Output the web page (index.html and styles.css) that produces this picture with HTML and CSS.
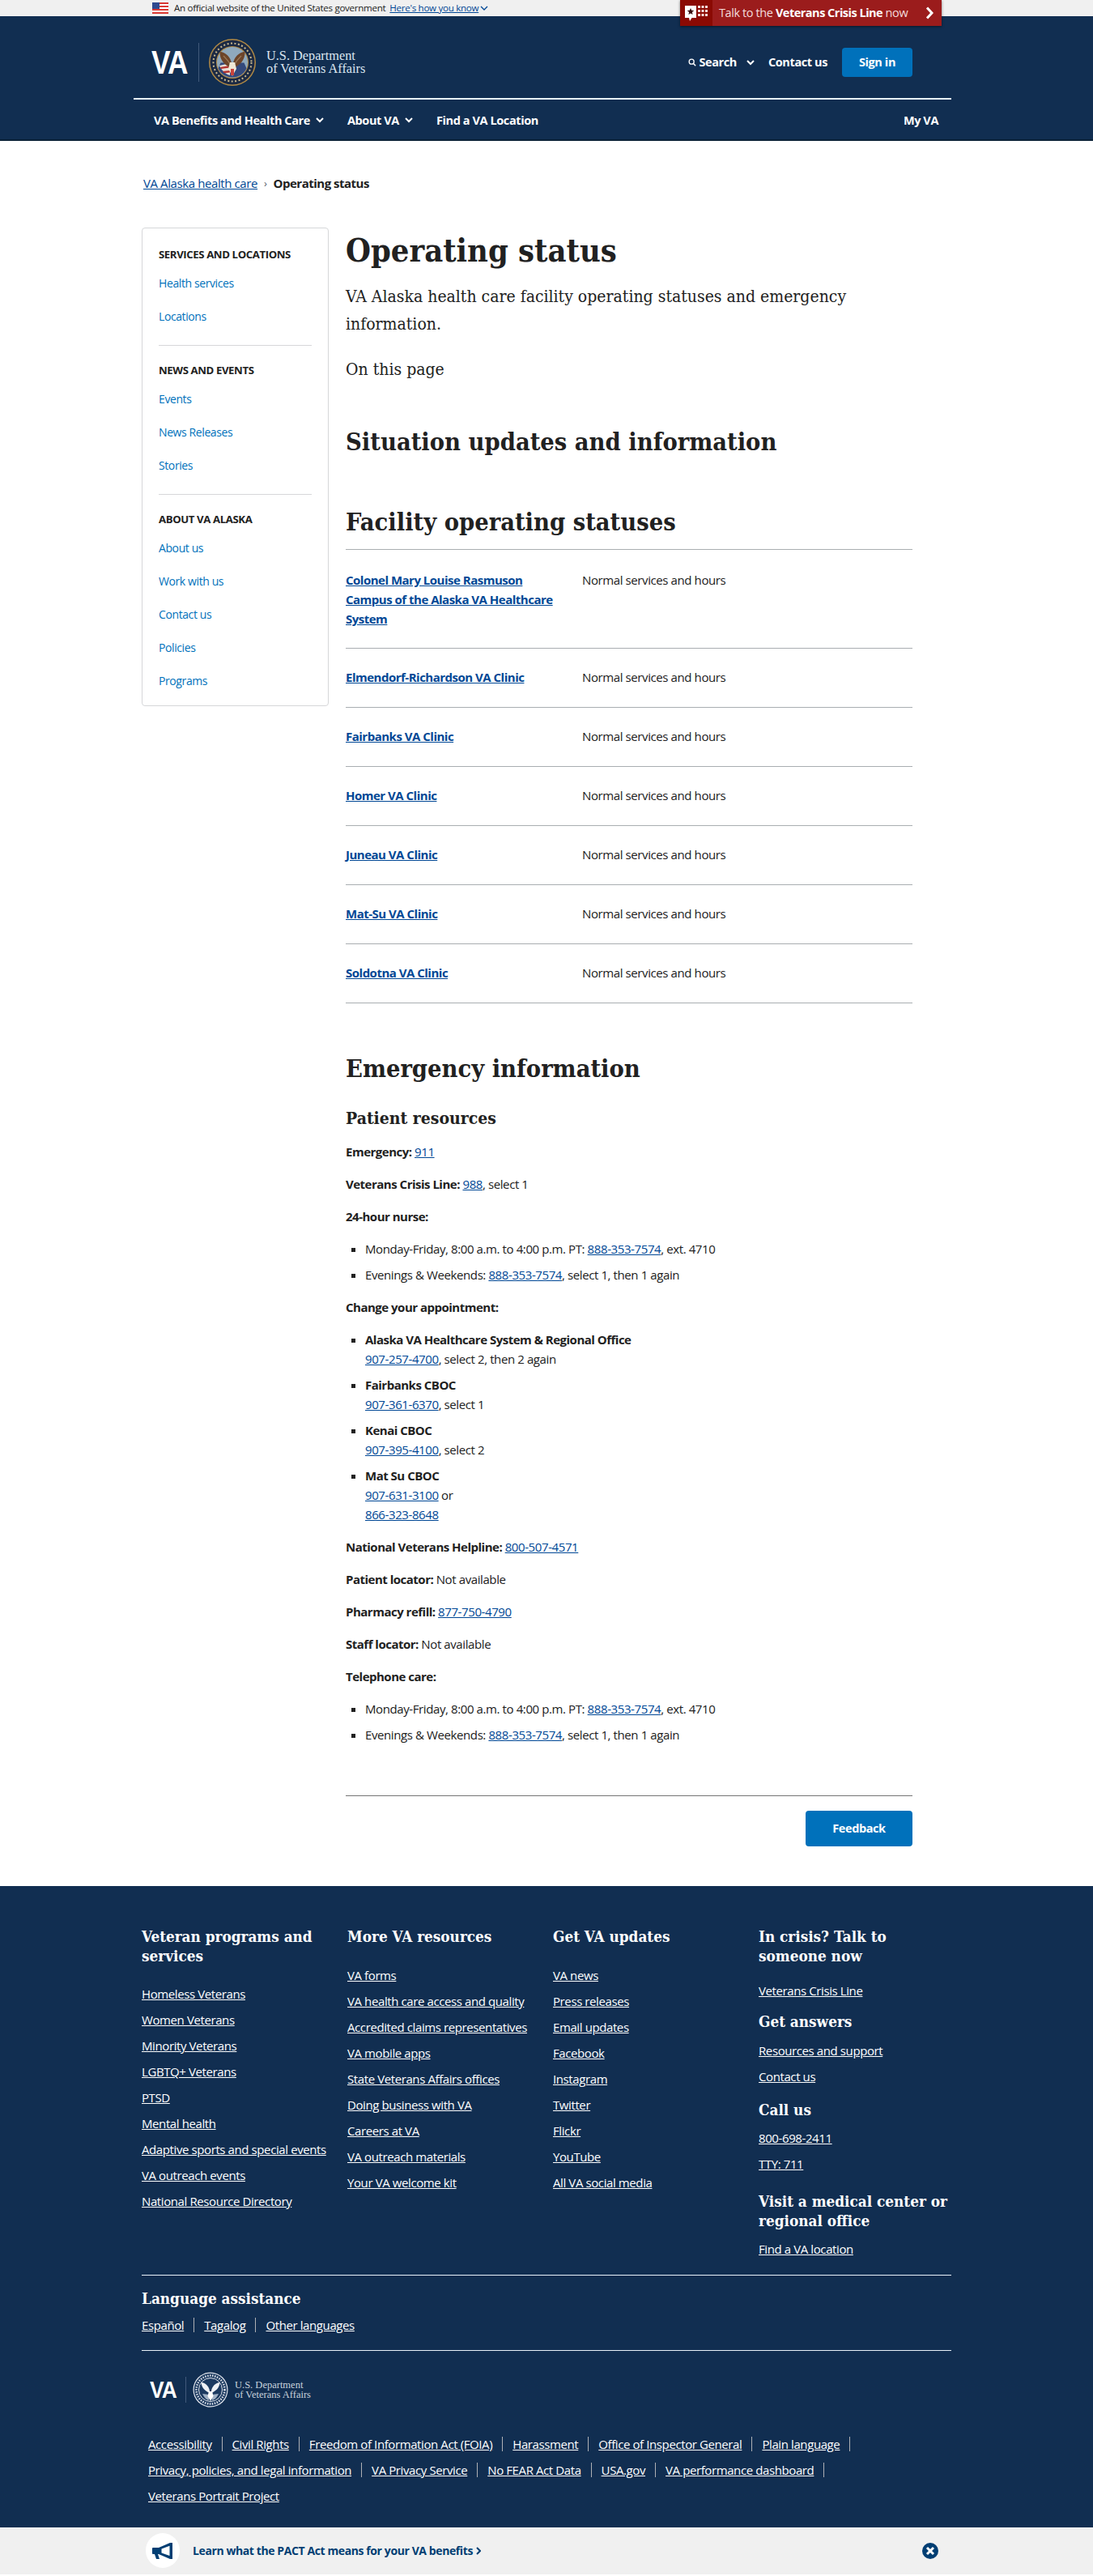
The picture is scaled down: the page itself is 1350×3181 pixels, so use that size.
FILE: index.html
```html
<!DOCTYPE html>
<html lang="en">
<head>
<meta charset="utf-8">
<title>Operating status | VA Alaska health care</title>
<link rel="stylesheet" href="styles.css">
</head>
<body>
<div class="gov-banner">
  <svg class="flag" viewBox="0 0 20 14" width="20" height="14"><rect width="20" height="14" fill="#fff"/><g fill="#d83933"><rect width="20" height="2"/><rect y="4" width="20" height="2"/><rect y="8" width="20" height="2"/><rect y="12" width="20" height="2"/></g><rect width="9" height="8" fill="#2e4a8f"/></svg>
  <span>An official website of the United States government</span>
  <a class="gov-link" href="#">Here's how you know</a>
  <svg class="gov-chev" viewBox="0 0 10 6" width="10" height="6"><path d="M1 1l4 4 4-4" fill="none" stroke="#004795" stroke-width="1.3"/></svg>
</div>

<a class="crisis" href="#">
  <span class="crisis-icon">
    <svg viewBox="0 0 30 24" width="30" height="24"><path d="M1 3h14v15H9.500L7 22l-1-4H1z" fill="#fff"/><path d="M8 6l1.200 2.800 3 .2-2.300 2 .7 3L8 12.400l-2.600 1.600.7-3-2.300-2 3-.2z" fill="#3a1111"/><g fill="#f6dcdc"><rect x="17" y="3" width="3" height="3"/><rect x="21.500" y="3" width="3" height="3"/><rect x="26" y="3" width="3" height="3"/><rect x="17" y="8" width="3" height="3"/><rect x="21.500" y="8" width="3" height="3"/><rect x="26" y="8" width="3" height="3"/><rect x="17" y="13" width="3" height="3"/><rect x="21.500" y="13" width="3" height="3"/><rect x="26" y="13" width="3" height="3"/></g></svg>
  </span>
  <span class="crisis-text">Talk to the <b>Veterans Crisis Line</b> now</span>
  <svg class="crisis-chev" viewBox="0 0 10 16" width="10" height="16"><path d="M2 1.500L8 8l-6 6.500" fill="none" stroke="#fff" stroke-width="3"/></svg>
</a>

<header class="site-header">
  <div class="masthead">
    <div class="logo">
      <span class="logo-va">VA</span>
      <span class="logo-sep"></span>
      <svg class="seal" viewBox="0 0 58 58" width="58" height="58">
        <circle cx="29" cy="29" r="29" fill="#b18a45"/>
        <circle cx="29" cy="29" r="27.500" fill="#1c2a44"/>
        <circle cx="29" cy="29" r="23.500" fill="none" stroke="#c9b98f" stroke-width="2" stroke-dasharray="2 2.500"/>
        <circle cx="29" cy="29" r="20" fill="#b18a45"/>
        <circle cx="29" cy="29" r="19" fill="#8fa9bd"/>
        <path d="M29 47.500c-8 0-14-4-17.500-11l3-7h29l3 7c-3.500 7-9.500 11-17.500 11z" fill="#33497c"/>
        <path d="M13 33l13-3v15c-6-2-10-6-13-12z" fill="#e9dcd2"/>
        <path d="M14 35l12-2v2.500l-11 1.500zM17 40l9-1v2.500l-7 .7z" fill="#b3302e"/>
        <path d="M28 36C20 33 13 26 13.500 16c7 0 14 7 14.500 15zM30 36c8-3 15-10 14.500-20-7 0-14 7-14.500 15z" fill="#6d452a"/>
        <path d="M18 21c3 3 6 6 8 10M40 21c-3 3-6 6-8 10" stroke="#9a7a58" stroke-width="1.200" fill="none"/>
        <path d="M26 29h6l2 8-5 9-5-9z" fill="#efe8d6"/>
        <path d="M27 37h4v8h-4z" fill="#c9443c"/>
      </svg>
      <span class="logo-text">U.S. Department<br>of Veterans Affairs</span>
    </div>
    <div class="utility">
      <svg class="search-icon" viewBox="0 0 12 12" width="10" height="10"><circle cx="5" cy="5" r="3.600" fill="none" stroke="#fff" stroke-width="1.600"/><path d="M7.500 7.500l3.500 3.500" stroke="#fff" stroke-width="1.800"/></svg>
      <span class="util-item util-search">Search</span>
      <svg class="chev chev-search" viewBox="0 0 10 7" width="10" height="7"><path d="M1 1l4 4 4-4" fill="none" stroke="#fff" stroke-width="2"/></svg>
      <a class="util-item util-contact" href="#">Contact us</a>
      <a class="signin" href="#">Sign in</a>
    </div>
  </div>
  <nav class="main-nav">
    <a class="nav-item" href="#">VA Benefits and Health Care<svg class="chev" viewBox="0 0 10 7" width="10" height="7"><path d="M1 1l4 4 4-4" fill="none" stroke="#fff" stroke-width="2"/></svg></a>
    <a class="nav-item" href="#">About VA<svg class="chev" viewBox="0 0 10 7" width="10" height="7"><path d="M1 1l4 4 4-4" fill="none" stroke="#fff" stroke-width="2"/></svg></a>
    <a class="nav-item" href="#">Find a VA Location</a>
    <a class="nav-item nav-right" href="#">My VA</a>
  </nav>
</header>

<div class="breadcrumb">
  <a href="#">VA Alaska health care</a>
  <span class="crumb-sep">›</span>
  <b>Operating status</b>
</div>

<div class="page">
  <aside class="sidenav">
    <h4>Services and locations</h4>
    <a href="#">Health services</a>
    <a href="#">Locations</a>
    <hr>
    <h4>News and events</h4>
    <a href="#">Events</a>
    <a href="#">News Releases</a>
    <a href="#">Stories</a>
    <hr>
    <h4>About VA Alaska</h4>
    <a href="#">About us</a>
    <a href="#">Work with us</a>
    <a href="#">Contact us</a>
    <a href="#">Policies</a>
    <a href="#">Programs</a>
  </aside>

  <main class="content">
    <h1>Operating status</h1>
    <p class="lead">VA Alaska health care facility operating statuses and emergency information.</p>
    <p class="lead on-page">On this page</p>
    <h2 class="h-situation">Situation updates and information</h2>
    <h2 class="h-facility">Facility operating statuses</h2>

    <div class="status-table">
      <div class="status-row"><a href="#">Colonel Mary Louise Rasmuson Campus of the Alaska VA Healthcare System</a><span>Normal services and hours</span></div>
      <div class="status-row"><a href="#">Elmendorf-Richardson VA Clinic</a><span>Normal services and hours</span></div>
      <div class="status-row"><a href="#">Fairbanks VA Clinic</a><span>Normal services and hours</span></div>
      <div class="status-row"><a href="#">Homer VA Clinic</a><span>Normal services and hours</span></div>
      <div class="status-row"><a href="#">Juneau VA Clinic</a><span>Normal services and hours</span></div>
      <div class="status-row"><a href="#">Mat-Su VA Clinic</a><span>Normal services and hours</span></div>
      <div class="status-row"><a href="#">Soldotna VA Clinic</a><span>Normal services and hours</span></div>
    </div>

    <h2 class="h-emergency">Emergency information</h2>
    <h3>Patient resources</h3>
    <div class="resources">
      <p><b>Emergency:</b> <a href="#">911</a></p>
      <p><b>Veterans Crisis Line:</b> <a href="#">988</a>, select 1</p>
      <p><b>24-hour nurse:</b></p>
      <ul>
        <li>Monday-Friday, 8:00 a.m. to 4:00 p.m. PT: <a href="#">888-353-7574</a>, ext. 4710</li>
        <li>Evenings &amp; Weekends: <a href="#">888-353-7574</a>, select 1, then 1 again</li>
      </ul>
      <p><b>Change your appointment:</b></p>
      <ul>
        <li><b>Alaska VA Healthcare System &amp; Regional Office</b><br><a href="#">907-257-4700</a>, select 2, then 2 again</li>
        <li><b>Fairbanks CBOC</b><br><a href="#">907-361-6370</a>, select 1</li>
        <li><b>Kenai CBOC</b><br><a href="#">907-395-4100</a>, select 2</li>
        <li><b>Mat Su CBOC</b><br><a href="#">907-631-3100</a> or<br><a href="#">866-323-8648</a></li>
      </ul>
      <p><b>National Veterans Helpline:</b> <a href="#">800-507-4571</a></p>
      <p><b>Patient locator:</b> Not available</p>
      <p><b>Pharmacy refill:</b> <a href="#">877-750-4790</a></p>
      <p><b>Staff locator:</b> Not available</p>
      <p><b>Telephone care:</b></p>
      <ul>
        <li>Monday-Friday, 8:00 a.m. to 4:00 p.m. PT: <a href="#">888-353-7574</a>, ext. 4710</li>
        <li>Evenings &amp; Weekends: <a href="#">888-353-7574</a>, select 1, then 1 again</li>
      </ul>
    </div>

    <div class="feedback-bar"><a class="feedback" href="#">Feedback</a></div>
  </main>
</div>

<footer class="site-footer">
  <div class="footer-cols">
    <div class="fcol">
      <h5>Veteran programs and services</h5>
      <a href="#">Homeless Veterans</a>
      <a href="#">Women Veterans</a>
      <a href="#">Minority Veterans</a>
      <a href="#">LGBTQ+ Veterans</a>
      <a href="#">PTSD</a>
      <a href="#">Mental health</a>
      <a href="#">Adaptive sports and special events</a>
      <a href="#">VA outreach events</a>
      <a href="#">National Resource Directory</a>
    </div>
    <div class="fcol">
      <h5>More VA resources</h5>
      <a href="#">VA forms</a>
      <a href="#">VA health care access and quality</a>
      <a href="#">Accredited claims representatives</a>
      <a href="#">VA mobile apps</a>
      <a href="#">State Veterans Affairs offices</a>
      <a href="#">Doing business with VA</a>
      <a href="#">Careers at VA</a>
      <a href="#">VA outreach materials</a>
      <a href="#">Your VA welcome kit</a>
    </div>
    <div class="fcol">
      <h5>Get VA updates</h5>
      <a href="#">VA news</a>
      <a href="#">Press releases</a>
      <a href="#">Email updates</a>
      <a href="#">Facebook</a>
      <a href="#">Instagram</a>
      <a href="#">Twitter</a>
      <a href="#">Flickr</a>
      <a href="#">YouTube</a>
      <a href="#">All VA social media</a>
    </div>
    <div class="fcol fcol-help">
      <h5>In crisis? Talk to someone now</h5>
      <a class="help-first" href="#">Veterans Crisis Line</a>
      <h5 class="help-answers">Get answers</h5>
      <a href="#">Resources and support</a>
      <a href="#">Contact us</a>
      <h5 class="help-call">Call us</h5>
      <a href="#">800-698-2411</a>
      <a href="#">TTY: 711</a>
      <h5 class="help-visit">Visit a medical center or regional office</h5>
      <a href="#">Find a VA location</a>
    </div>
  </div>

  <div class="language">
    <h5>Language assistance</h5>
    <div class="inline-links">
      <a href="#">Español</a><i></i><a href="#">Tagalog</a><i></i><a href="#">Other languages</a>
    </div>
  </div>

  <div class="footer-logo">
    <span class="flogo-va">VA</span>
    <span class="flogo-sep"></span>
    <svg viewBox="0 0 44 44" width="44" height="44">
      <circle cx="22" cy="22" r="21.500" fill="#dfe3ea"/>
      <circle cx="22" cy="22" r="20.300" fill="#1c3a60"/>
      <circle cx="22" cy="22" r="17.500" fill="none" stroke="#dfe3ea" stroke-width="2.500" stroke-dasharray="1.500 1.500"/>
      <circle cx="22" cy="22" r="14.500" fill="none" stroke="#dfe3ea" stroke-width="1"/>
      <path d="M21 26C16 24 11 20 10.500 13c5 0 10 5 10.500 11zM23 26c5-2 10-6 10.500-13-5 0-10 5-10.500 11z" fill="#eef1f5"/>
      <path d="M12 27l8 1v7c-4-1-6-4-8-8zM32 27l-8 1v7c4-1 6-4 8-8z" fill="#9fb0c4"/>
      <path d="M20 24h4l1.500 6-3.500 6-3.500-6z" fill="#fff"/>
    </svg>
    <span class="flogo-text">U.S. Department<br>of Veterans Affairs</span>
  </div>

  <div class="legal">
    <div class="inline-links">
      <a href="#">Accessibility</a><i></i><a href="#">Civil Rights</a><i></i><a href="#">Freedom of Information Act (FOIA)</a><i></i><a href="#">Harassment</a><i></i><a href="#">Office of Inspector General</a><i></i><a href="#">Plain language</a><i></i>
    </div>
    <div class="inline-links">
      <a href="#">Privacy, policies, and legal information</a><i></i><a href="#">VA Privacy Service</a><i></i><a href="#">No FEAR Act Data</a><i></i><a href="#">USA.gov</a><i></i><a href="#">VA performance dashboard</a><i></i>
    </div>
    <div class="inline-links">
      <a href="#">Veterans Portrait Project</a>
    </div>
  </div>
</footer>

<div class="promo">
  <span class="promo-icon">
    <svg viewBox="0 0 26 20" width="26" height="20"><path d="M1 6h7v8H1a1 1 0 0 1-1-1V7a1 1 0 0 1 1-1z" fill="#003e73"/><path fill-rule="evenodd" d="M8 6l14-6h3v20h-3L8 14zM11.500 7.500v5l10 3.500V3.800z" fill="#003e73"/><path d="M3 14h4l2 6H5z" fill="#003e73"/></svg>
  </span>
  <a class="promo-link" href="#">Learn what the PACT Act means for your VA benefits</a>
  <svg class="promo-chev" viewBox="0 0 6 10" width="6" height="10"><path d="M1 1l4 4-4 4" fill="none" stroke="#003e73" stroke-width="2"/></svg>
  <svg class="promo-close" viewBox="0 0 20 20" width="20" height="20"><circle cx="10" cy="10" r="10" fill="#003e73"/><path d="M6 6l8 8M14 6l-8 8" stroke="#fff" stroke-width="3"/></svg>
</div>
</body>
</html>
```
FILE: styles.css
```css
* { box-sizing: border-box; }
html, body { margin: 0; padding: 0; }
body {
  position: relative;
  font-family: "Open Sans", Lato, "Liberation Sans", sans-serif;
  font-stretch: 90%;
  font-size: 15px;
  letter-spacing: -.4px;
  line-height: 24px;
  color: #212121;
  background: #fff;
}
a { color: #004795; }
b { letter-spacing: -.5px; }
h1, h2, h3, h5 {
  margin: 0;
  font-family: "DejaVu Serif Condensed", "DejaVu Serif", serif;
  font-weight: 700;
  font-stretch: normal;
  letter-spacing: 0;
  color: #212121;
}

/* Gov banner */
.gov-banner {
  height: 20px;
  padding-left: 188px;
  display: flex;
  align-items: center;
  background: #f0f0f0;
  font-size: 11.600px;
  letter-spacing: -.3px;
  line-height: 20px;
}
.flag { margin-right: 7px; flex: none; }
.gov-link { margin-left: 5px; }
.gov-chev { margin-left: 2px; }

/* Crisis button */
.crisis {
  position: absolute;
  top: 0;
  left: 840px;
  width: 323px;
  height: 32px;
  display: flex;
  align-items: center;
  background: #9b1c1c;
  box-shadow: 0 1px 3px rgba(0, 0, 0, .5);
  color: #f3dcdc;
  text-decoration: none;
  font-size: 14.500px;
  z-index: 2;
}
.crisis-icon {
  width: 40px;
  height: 32px;
  display: flex;
  align-items: center;
  justify-content: center;
  background: #8b0a03;
}
.crisis-text { margin-left: 8px; white-space: nowrap; }
.crisis-text b { color: #fff; }
.crisis-chev { margin-left: auto; margin-right: 10px; }

/* Header */
.site-header {
  height: 154px;
  background: #112e51;
  border-bottom: 2px solid #0b2238;
  color: #fff;
}
.masthead {
  height: 103px;
  margin: 0 175px 0 165px;
  padding: 0 48px 0 22px;
  display: flex;
  align-items: center;
  justify-content: space-between;
  border-bottom: 2px solid #e8f1f8;
}
.logo { display: flex; align-items: center; margin-top: 13px; height: 60px; }
.logo-va {
  width: 46px;
  font-family: "Liberation Sans", sans-serif;
  font-stretch: normal;
  font-weight: 700;
  font-size: 41px;
  line-height: 48px;
  letter-spacing: -1px;
  color: #fff;
  transform: scaleX(.86);
  transform-origin: left center;
}
.logo-sep { width: 1px; height: 48px; margin: 0 12px; background: #41597a; }
.seal { flex: none; }
.logo-text {
  margin-left: 13px;
  font-family: "Liberation Serif", serif;
  font-stretch: normal;
  font-size: 16.300px;
  letter-spacing: 0;
  line-height: 16px;
  color: #dbe5ef;
  white-space: nowrap;
}
.utility { display: flex; align-items: center; margin-top: 13px; }
.search-icon { margin-right: 3px; }
.util-item { color: #fff; font-weight: 700; font-size: 14.500px; text-decoration: none; }
.chev-search { margin: 0 17px 0 12px; }
.signin {
  width: 87px;
  height: 36px;
  margin-left: 18px;
  display: flex;
  align-items: center;
  justify-content: center;
  background: #0071bb;
  border-radius: 4px;
  color: #fff;
  font-weight: 700;
  font-size: 14.500px;
  text-decoration: none;
}
.main-nav {
  height: 49px;
  margin: 0 175px 0 165px;
  padding: 2px 16px 0 25px;
  display: flex;
  align-items: center;
  gap: 29px;
}
.nav-item {
  color: #fff;
  font-weight: 700;
  font-size: 14.500px;
  text-decoration: none;
  display: flex;
  align-items: center;
  white-space: nowrap;
}
.nav-item .chev { margin-left: 7px; }
.nav-right { margin-left: auto; }

/* Breadcrumb */
.breadcrumb {
  height: 24px;
  margin: 40px 0 0 177px;
  display: flex;
  align-items: center;
  gap: 8px;
  font-size: 15px;
}
.crumb-sep { color: #5b616b; font-size: 13px; }

/* Page layout */
.page {
  margin: 43px 223px 0 175px;
  display: flex;
  align-items: flex-start;
  gap: 21px;
}
.sidenav {
  flex: none;
  width: 231px;
  height: 591px;
  padding: 20px 20px 0;
  display: flex;
  flex-direction: column;
  background: #fff;
  border: 1px solid #d6d7d9;
  border-radius: 4px;
  font-size: 14px;
}
.sidenav h4 {
  margin: 0 0 12px;
  font-size: 13.200px;
  line-height: 24px;
  font-weight: 700;
  text-transform: uppercase;
  color: #212121;
}
.sidenav a {
  height: 41px;
  flex: none;
  line-height: 24px;
  color: #0071bb;
  text-decoration: none;
}
.sidenav hr {
  width: 100%;
  margin: 6px 0 18px;
  border: 0;
  border-top: 1px solid #d6d7d9;
}

/* Main */
.content { flex: 1; min-width: 0; padding-top: 4px; }
h1 { font-size: 39.500px; line-height: 48px; }
.lead {
  margin: 16px 0 0;
  font-family: "DejaVu Serif Condensed", "DejaVu Serif", serif;
  font-stretch: normal;
  font-size: 21px;
  letter-spacing: 0;
  line-height: 34px;
}
.on-page { margin-top: 22px; }
h2 { font-size: 30.500px; line-height: 40px; }
.h-situation { margin-top: 52px; }
.h-facility { margin-top: 59px; }
.h-emergency { margin-top: 60px; }
.status-table { margin-top: 14px; border-bottom: 1px solid #a9aeb1; }
.status-row {
  min-height: 73px;
  padding: 23px 0 24px;
  display: grid;
  grid-template-columns: 262px 1fr;
  column-gap: 30px;
  border-top: 1px solid #a9aeb1;
}
.status-row:first-child { padding-top: 25px; }
.status-row a { font-weight: 700; letter-spacing: -.5px; }
h3 { margin-top: 28px; font-size: 21px; line-height: 28px; }
.resources p { margin: 16px 0 0; }
.resources p:first-child { margin-top: 15px; }
.resources ul { margin: 16px 0 0; padding: 0 0 0 24px; list-style: square; }
.resources li + li { margin-top: 8px; }
.feedback-bar {
  margin-top: 63px;
  padding-top: 18px;
  display: flex;
  justify-content: flex-end;
  border-top: 1px solid #757575;
}
.feedback {
  width: 132px;
  height: 44px;
  display: flex;
  align-items: center;
  justify-content: center;
  background: #0071bb;
  border-radius: 4px;
  color: #fff;
  font-weight: 700;
  font-size: 14.500px;
  text-decoration: none;
}

/* Footer */
.site-footer {
  margin-top: 49px;
  padding: 51px 175px 27px;
  background: #112e51;
  color: #fff;
}
.site-footer a { color: #fff; }
.site-footer h5 { color: #fff; font-size: 18.800px; line-height: 23.500px; }
.footer-cols {
  display: grid;
  grid-template-columns: 254px 254px 254px 238px;
  padding-bottom: 20px;
  border-bottom: 1px solid #e8f1f8;
}
.fcol { display: flex; flex-direction: column; align-items: flex-start; }
.fcol a { display: block; white-space: nowrap; }
.fcol h5 { margin-bottom: 23px; }
.fcol a + a { margin-top: 8px; }
.fcol-help h5 { margin-bottom: 11px; }
.fcol-help h5:first-child { margin-bottom: 19px; }
.help-answers { margin-top: 15px; }
.help-call { margin-top: 18px; }
.fcol-help .help-visit { margin-top: 23px; }
.language {
  padding: 17px 0 19px;
  border-bottom: 1px solid #e8f1f8;
}
.language h5 { margin-bottom: 8px; }
.inline-links { display: flex; align-items: center; }
.inline-links i {
  width: 1px;
  height: 18px;
  margin: 0 12px;
  background: #aeb0b5;
}
.footer-logo {
  height: 50px;
  margin: 23px 0 0 10px;
  display: flex;
  align-items: center;
}
.flogo-va {
  width: 36px;
  font-family: "Liberation Sans", sans-serif;
  font-stretch: normal;
  font-weight: 700;
  font-size: 30px;
  line-height: 34px;
  letter-spacing: -1px;
  transform: scaleX(.88);
  transform-origin: left center;
}
.flogo-sep { width: 1px; height: 32px; margin: 0 8px; background: #41597a; }
.flogo-text {
  margin-left: 8px;
  font-family: "Liberation Serif", serif;
  font-stretch: normal;
  font-size: 12.500px;
  letter-spacing: 0;
  line-height: 12px;
  color: #c8d2dc;
  white-space: nowrap;
}
.legal { margin: 30px 0 0 8px; }
.legal .inline-links + .inline-links { margin-top: 8px; }

/* Promo */
.promo {
  height: 58px;
  padding-left: 180px;
  display: flex;
  align-items: center;
  background: #f0f0f0;
}
.promo-icon {
  width: 42px;
  height: 43px;
  flex: none;
  display: flex;
  align-items: center;
  justify-content: center;
  background: #fff;
  border-radius: 50%;
}
.promo-link {
  margin-left: 16px;
  color: #003e73;
  font-weight: 700;
  font-size: 14px;
  text-decoration: none;
}
.promo-chev { margin-left: 4px; }
.promo-close { margin-left: auto; margin-right: 191px; }
```
